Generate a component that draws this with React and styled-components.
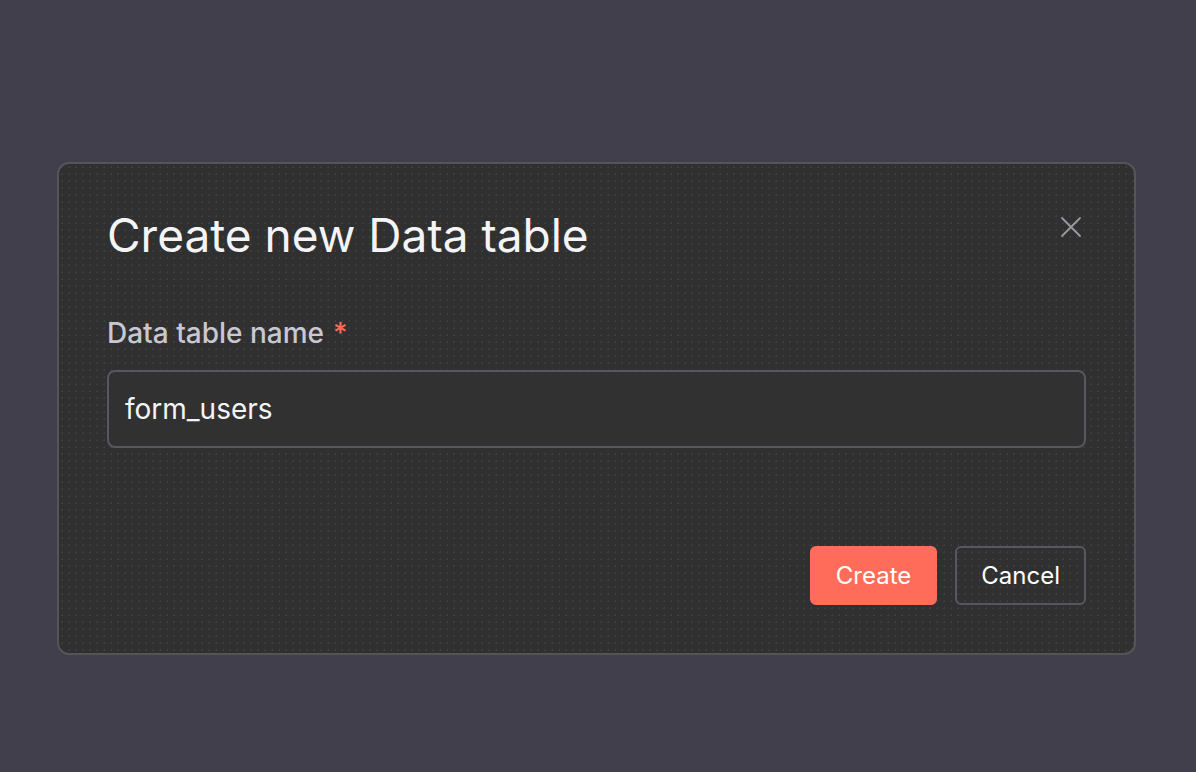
import styled, { createGlobalStyle } from "styled-components";

const GlobalStyle = createGlobalStyle`
  html, body {
    margin: 0;
    padding: 0;
    background: #423f4d;
    font-family: Inter, "Open Sans", sans-serif;
  }
`;

const Page = styled.div`
  width: 1196px;
  height: 772px;
  box-sizing: border-box;
  padding: 162px 0 0 57px;
`;

const Dialog = styled.div`
  width: 1079px;
  height: 493px;
  box-sizing: border-box;
  background-color: #303030;
  background-image: radial-gradient(rgba(90, 88, 110, 0.35) 1px, transparent 1px);
  background-size: 7px 7px;
  border: 2px solid #555558;
  border-radius: 12px;
  padding: 41px 48px 48px 48px;
  display: flex;
  flex-direction: column;
`;

const Header = styled.div`
  display: flex;
  align-items: flex-start;
  justify-content: space-between;
`;

const Title = styled.h1`
  margin: 0;
  font-size: 46px;
  font-weight: 400;
  line-height: 60px;
  color: #f4f4f6;
`;

const CloseButton = styled.button`
  background: none;
  border: none;
  padding: 0;
  margin-top: 10px;
  margin-right: 3px;
  width: 24px;
  height: 24px;
  color: #9a9aa0;
  display: flex;
  align-items: center;
  justify-content: center;
`;

const Field = styled.div`
  margin-top: 50px;
  display: flex;
  flex-direction: column;
`;

const Label = styled.label`
  font-size: 28px;
  line-height: 36px;
  color: #c9c8d0;
  font-weight: 500;
  span {
    color: #ff6d5a;
    margin-left: 9px;
  }
`;

const Input = styled.div`
  margin-top: 19px;
  height: 78px;
  box-sizing: border-box;
  border: 2px solid #58585c;
  border-radius: 8px;
  background: #313131;
  display: flex;
  align-items: center;
  padding: 0 16px;
  font-size: 28px;
  color: #f4f4f6;
`;

const Footer = styled.div`
  margin-top: auto;
  display: flex;
  justify-content: flex-end;
  gap: 18px;
`;

const Button = styled.button`
  height: 59px;
  box-sizing: border-box;
  padding: 0 24px;
  border-radius: 6px;
  font-family: inherit;
  font-size: 24px;
  font-weight: 400;
  color: #ffffff;
  background: ${(p) => (p.$primary ? "#ff6d5a" : "transparent")};
  border: 2px solid ${(p) => (p.$primary ? "#ff6d5a" : "#58585c")};
`;

const App = () => {
  return (
    <Page>
      <GlobalStyle />
      <Dialog>
        <Header>
          <Title>Create new Data table</Title>
          <CloseButton aria-label="close">
            <svg width="22" height="22" viewBox="0 0 22 22" fill="none">
              <path d="M2 2L20 20M20 2L2 20" stroke="currentColor" strokeWidth="1.8" strokeLinecap="round" />
            </svg>
          </CloseButton>
        </Header>
        <Field>
          <Label>
            Data table name<span>*</span>
          </Label>
          <Input>form_users</Input>
        </Field>
        <Footer>
          <Button $primary>Create</Button>
          <Button>Cancel</Button>
        </Footer>
      </Dialog>
    </Page>
  );
};

export default App;
